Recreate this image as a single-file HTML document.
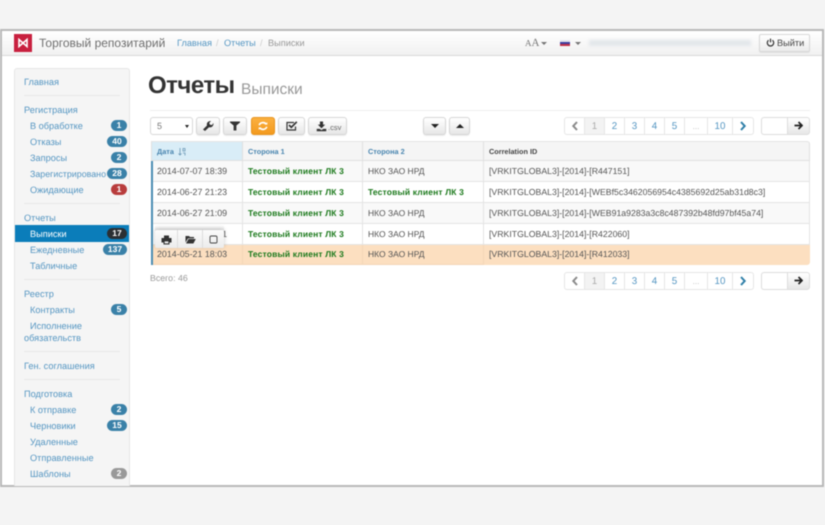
<!DOCTYPE html>
<html lang="ru"><head><meta charset="utf-8"><title>Отчеты</title>
<style>
html,body{margin:0;padding:0;width:825px;height:525px;overflow:hidden;background:#f4f4f4}
#p{position:absolute;left:0;top:0;width:825px;height:525px;overflow:hidden;font-family:"Liberation Sans",sans-serif;filter:blur(.45px);color:#555;text-rendering:geometricPrecision}
#p div,#p span.a{position:absolute;white-space:nowrap}
.f{left:0;top:29px;width:820px;height:454px;background:#fff;border:2px solid #b9b9b9}
.h{left:2px;top:31px;width:820px;height:24px;background:linear-gradient(#fff,#f1f1f1);border-bottom:1px solid #d9d9d9}
.s{left:14px;top:68px;width:114px;height:417px;background:#f5f5f5;border:1px solid #e6e6e6;border-bottom:0;border-radius:3px 3px 0 0}
.n{font-size:9.2px;line-height:12px;color:#5596c2;margin-top:1px}
.d{left:24px;width:96px;height:1px;background:#e8e8e8}
.b{height:11px;line-height:11px;border-radius:6px;background:#3a81a8;color:#fff;font-size:8.5px;font-weight:bold;text-align:center}
.btn{top:117px;height:18px;box-sizing:border-box;background:linear-gradient(#fff,#e7e7e7);border:1px solid #d6d6d6;border-radius:3px;box-shadow:0 1px 1px rgba(0,0,0,.08)}
.btn svg{position:absolute;left:50%;top:50%;transform:translate(-50%,-50%)}
.c{box-sizing:border-box;height:21px;border-right:1px solid #e4e4e4;border-bottom:1px solid #e4e4e4;font-size:8.9px;line-height:21px;padding-left:6px;color:#555}
.g{color:#1d7a1d;font-weight:bold;font-size:8.5px;letter-spacing:.15px}
.k{font-size:8.5px}
.r{font-size:8.72px}
.hd{font-size:7.3px;font-weight:bold;color:#4a86b0;height:20px;line-height:20px;top:141px;box-sizing:border-box;padding-left:5px;border-right:1px solid #e0e0e0;border-top:1px solid #e4e4e4;border-bottom:1px solid #e0e0e0;background:#f5f5f5}
.pg{height:18px;line-height:17px;box-sizing:border-box;background:#fff;border:1px solid #e6e6e6;border-left:0;font-size:9.8px;color:#5596c2;text-align:center}
.pg svg{position:absolute;left:50%;top:50%;transform:translate(-50%,-50%)}
</style></head><body><div id="p">
<div class="f"></div>
<div class="h"></div>

<!-- header -->
<div style="left:14px;top:34px;width:18px;height:18px;background:#c8203f"></div>
<svg style="position:absolute;left:17px;top:38px" width="12" height="10" viewBox="0 0 12 10"><path d="M2 1.5 V8.5 L10 1.5 V8.5 Z" fill="none" stroke="#fff" stroke-width="1.6"/></svg>
<div style="left:39px;top:35px;font-size:12px;line-height:16px;color:#6f6f6f">Торговый репозитарий</div>
<div style="left:177px;top:37px;font-size:9.2px;line-height:12px;color:#5596c2">Главная</div>
<div style="left:216px;top:37px;font-size:9.2px;line-height:12px;color:#ccc">/</div>
<div style="left:224px;top:37px;font-size:9.2px;line-height:12px;color:#5596c2">Отчеты</div>
<div style="left:260px;top:37px;font-size:9.2px;line-height:12px;color:#ccc">/</div>
<div style="left:268px;top:37px;font-size:9.2px;line-height:12px;color:#999">Выписки</div>

<div style="left:525px;top:37px;font-family:'Liberation Serif',serif;font-size:11px;line-height:12px;color:#777"><span style="font-size:9px">A</span>A</div>
<div style="left:541px;top:42px;border:3px solid transparent;border-top-color:#777;border-bottom:0"></div>
<div style="left:560px;top:40px;width:10px;height:2px;background:#e4e4ee"></div>
<div style="left:560px;top:42px;width:10px;height:2px;background:#3c3ea0"></div>
<div style="left:560px;top:44px;width:10px;height:2px;background:#c23048"></div>
<div style="left:575px;top:42px;border:3px solid transparent;border-top-color:#777;border-bottom:0"></div>
<div style="left:589px;top:40px;width:162px;height:6px;background:#e2e6ea;filter:blur(1.5px)"></div>
<div style="left:759px;top:34px;width:51px;height:18px;box-sizing:border-box;background:linear-gradient(#fff,#ececec);border:1px solid #d8d8d8;border-radius:2px;font-size:9.2px;line-height:17px;color:#444;padding-left:17px;box-shadow:0 1px 1px rgba(0,0,0,.08)">Выйти</div>
<svg style="position:absolute;left:766px;top:38px" width="9" height="9" viewBox="0 0 9 9"><path d="M2.6 2.2 A3.2 3.2 0 1 0 6.4 2.2 M4.5 .6 V4.4" fill="none" stroke="#333" stroke-width="1.2"/></svg>

<!-- sidebar -->
<div class="s"></div>
<div style="left:15px;top:225px;width:114px;height:17px;background:#0b7dba"></div>
<div class="d" style="top:95px"></div><div class="d" style="top:203px"></div><div class="d" style="top:279px"></div><div class="d" style="top:351px"></div><div class="d" style="top:379px"></div>

<div class="n" style="left:24px;top:75px">Главная</div>
<div class="n" style="left:24px;top:103px">Регистрация</div>
<div class="n" style="left:30px;top:119px">В обработке</div>
<div class="n" style="left:30px;top:135px">Отказы</div>
<div class="n" style="left:30px;top:151px">Запросы</div>
<div class="n" style="left:30px;top:167px;font-size:8.9px">Зарегистрировано</div>
<div class="n" style="left:30px;top:183px">Ожидающие</div>
<div class="n" style="left:24px;top:211px">Отчеты</div>
<div class="n" style="left:30px;top:227px;color:#fff">Выписки</div>
<div class="n" style="left:30px;top:243px">Ежедневные</div>
<div class="n" style="left:30px;top:259px">Табличные</div>
<div class="n" style="left:24px;top:287px">Реестр</div>
<div class="n" style="left:30px;top:303px">Контракты</div>
<div class="n" style="left:30px;top:319px">Исполнение</div>
<div class="n" style="left:24px;top:331px">обязательств</div>
<div class="n" style="left:24px;top:359px">Ген. соглашения</div>
<div class="n" style="left:24px;top:387px">Подготовка</div>
<div class="n" style="left:30px;top:403px">К отправке</div>
<div class="n" style="left:30px;top:419px">Черновики</div>
<div class="n" style="left:30px;top:435px">Удаленные</div>
<div class="n" style="left:30px;top:451px">Отправленные</div>
<div class="n" style="left:30px;top:467px">Шаблоны</div>

<div class="b" style="left:111px;top:120px;width:16px">1</div>
<div class="b" style="left:107px;top:136px;width:20px">40</div>
<div class="b" style="left:111px;top:152px;width:16px">2</div>
<div class="b" style="left:107px;top:168px;width:20px">28</div>
<div class="b" style="left:111px;top:184px;width:16px;background:#b83c3c">1</div>
<div class="b" style="left:107px;top:228px;width:20px;background:#2b2f33">17</div>
<div class="b" style="left:103px;top:244px;width:24px">137</div>
<div class="b" style="left:111px;top:304px;width:16px">5</div>
<div class="b" style="left:111px;top:404px;width:16px">2</div>
<div class="b" style="left:107px;top:420px;width:20px">15</div>
<div class="b" style="left:111px;top:468px;width:16px;background:#999">2</div>

<!-- title -->
<div style="left:148px;top:71px;font-size:24px;line-height:30px;font-weight:bold;color:#333;letter-spacing:-.5px">Отчеты</div>
<div style="left:241px;top:80px;font-size:15.5px;line-height:20px;color:#999">Выписки</div>
<div style="left:150px;top:110px;width:660px;height:1px;background:#eee"></div>

<!-- toolbar -->
<div style="left:150px;top:117px;width:43px;height:18px;box-sizing:border-box;background:#fff;border:1px solid #d8d8d8;border-radius:3px;font-size:9px;line-height:16px;color:#777;padding-left:6px">5</div>
<div style="left:185px;top:125px;border:2px solid transparent;border-top:3px solid #222;border-bottom:0"></div>

<div class="btn" style="left:196px;width:24px"><svg width="12" height="12" viewBox="0 0 12 12"><path d="M1 9.5 L5 5.5 C4.3 3 6 .8 9 1 L7.2 3 L8 4.8 L10 5 L11.5 3 C11.8 6 9.5 8 7 7.2 L3 11 Z" fill="#333"/></svg></div>
<div class="btn" style="left:223px;width:24px"><svg width="11" height="10" viewBox="0 0 11 10"><path d="M.5 .5 H10.5 V1.5 L6.9 4.5 V9.5 H4.1 V4.5 L.5 1.5 Z" fill="#333"/></svg></div>
<div class="btn" style="left:251px;width:24px;background:linear-gradient(#fbb040,#f39a1e);border-color:#e8941e"><svg width="10" height="10" viewBox="0 0 12 11"><path d="M1.5 4.5 A4.6 4 0 0 1 9.6 3 M10.5 6.5 A4.6 4 0 0 1 2.4 8" fill="none" stroke="#fff" stroke-width="2"/><path d="M8 3.8 H11.2 V.8 Z M4 7.2 H.8 V10.2 Z" fill="#fff"/></svg></div>
<div class="btn" style="left:278px;width:27px"><svg width="12" height="11" viewBox="0 0 12 11"><path d="M9.5 6 V9.5 H1 V2 H8" fill="none" stroke="#333" stroke-width="1.2"/><path d="M3 4.5 L5.3 6.8 L10.8 1.3" fill="none" stroke="#333" stroke-width="1.7"/></svg></div>
<div class="btn" style="left:308px;width:39px"><svg style="left:7px;top:2.5px;transform:none" width="11" height="11" viewBox="0 0 12 12"><path d="M4.3 .5 H7.7 V4 H10 L6 8 L2 4 H4.3 Z M.8 8.6 H4 L6 10 L8 8.6 H11.2 V11.2 H.8 Z" fill="#333"/></svg><span class="a" style="left:19px;top:4px;font-size:7.5px;line-height:11px;color:#666">.csv</span></div>

<div class="btn" style="left:423px;width:23px"><span class="a" style="left:7px;top:6px;width:0;height:0;border:4px solid transparent;border-top:4px solid #222;border-bottom:0"></span></div>
<div class="btn" style="left:449px;width:21px"><span class="a" style="left:6px;top:6px;width:0;height:0;border:4px solid transparent;border-bottom:4px solid #222;border-top:0"></span></div>

<!-- table -->
<div style="left:151px;top:141px;width:659px;height:124px;border-radius:3px;background:#fff"></div>
<div class="hd" style="left:151px;width:92px;background:#d9edf7;padding-left:5px;border-left:1px solid #e0e0e0">Дата<svg style="position:absolute;left:26px;top:6px" width="8" height="8" viewBox="0 0 8 8"><path d="M2 0 V7 M.5 5.5 L2 7 L3.5 5.5 M5 .5 H7 V3 H5 Z M5 5 H7 V7.5" fill="none" stroke="#6a97b5" stroke-width=".8"/></svg></div>
<div class="hd" style="left:243px;width:120px">Сторона 1</div>
<div class="hd" style="left:363px;width:121px">Сторона 2</div>
<div class="hd" style="left:484px;width:326px;color:#444;border-radius:0 3px 0 0">Correlation ID</div>

<!-- rows -->
<div class="c" style="left:151px;top:161px;width:92px;background:#f9f9f9">2014-07-07 18:39</div>
<div class="c g" style="left:243px;top:161px;width:120px;background:#f9f9f9;padding-left:5px">Тестовый клиент ЛК 3</div>
<div class="c k" style="left:363px;top:161px;width:121px;background:#f9f9f9;padding-left:5px">НКО ЗАО НРД</div>
<div class="c r" style="left:484px;top:161px;width:326px;background:#f9f9f9;padding-left:5px">[VRKITGLOBAL3]-[2014]-[R447151]</div>

<div class="c" style="left:151px;top:182px;width:92px;">2014-06-27 21:23</div>
<div class="c g" style="left:243px;top:182px;width:120px;padding-left:5px">Тестовый клиент ЛК 3</div>
<div class="c g" style="left:363px;top:182px;width:121px;padding-left:5px">Тестовый клиент ЛК 3</div>
<div class="c r" style="left:484px;top:182px;width:326px;padding-left:5px">[VRKITGLOBAL3]-[2014]-[WEBf5c3462056954c4385692d25ab31d8c3]</div>

<div class="c" style="left:151px;top:203px;width:92px;background:#f9f9f9">2014-06-27 21:09</div>
<div class="c g" style="left:243px;top:203px;width:120px;background:#f9f9f9;padding-left:5px">Тестовый клиент ЛК 3</div>
<div class="c k" style="left:363px;top:203px;width:121px;background:#f9f9f9;padding-left:5px">НКО ЗАО НРД</div>
<div class="c r" style="left:484px;top:203px;width:326px;background:#f9f9f9;padding-left:5px">[VRKITGLOBAL3]-[2014]-[WEB91a9283a3c8c487392b48fd97bf45a74]</div>

<div class="c" style="left:151px;top:224px;width:92px;">2014-06-27 21:01</div>
<div class="c g" style="left:243px;top:224px;width:120px;padding-left:5px">Тестовый клиент ЛК 3</div>
<div class="c k" style="left:363px;top:224px;width:121px;padding-left:5px">НКО ЗАО НРД</div>
<div class="c r" style="left:484px;top:224px;width:326px;padding-left:5px">[VRKITGLOBAL3]-[2014]-[R422060]</div>

<div class="c" style="left:151px;top:245px;width:92px;background:#fcdfc0;border-color:#f3d6b8;height:20px;line-height:19px">2014-05-21 18:03</div>
<div class="c g" style="left:243px;top:245px;width:120px;background:#fcdfc0;border-color:#f3d6b8;padding-left:5px;height:20px;line-height:19px">Тестовый клиент ЛК 3</div>
<div class="c k" style="left:363px;top:245px;width:121px;background:#fcdfc0;border-color:#f3d6b8;padding-left:5px;height:20px;line-height:19px">НКО ЗАО НРД</div>
<div class="c r" style="left:484px;top:245px;width:326px;background:#fcdfc0;border:0;padding-left:5px;height:20px;line-height:19px;border-radius:0 0 3px 0">[VRKITGLOBAL3]-[2014]-[R412033]</div>
<div style="left:151px;top:161px;width:1.5px;height:104px;background:#4b8db3"></div>

<!-- popup -->
<div style="left:155px;top:225px;width:69px;height:6px;background:linear-gradient(#fff,#e8e8e8)"></div>
<div style="left:155px;top:230px;width:69px;height:18px;background:linear-gradient(#fbfbfb,#ececec);border-radius:2px;box-shadow:0 -1px 4px rgba(0,0,0,.22)"></div>
<div style="left:177px;top:230px;width:1px;height:18px;background:#dcdcdc"></div>
<div style="left:202px;top:230px;width:1px;height:18px;background:#dcdcdc"></div>
<svg style="position:absolute;left:161px;top:235px" width="11" height="10" viewBox="0 0 11 10"><path d="M3 0.5 H8 V3 H10.5 V7.5 H8.5 V9.5 H2.5 V7.5 H.5 V3 H3 Z" fill="#333"/><path d="M3.6 6.4 H7.4 V8.4 H3.6 Z" fill="#eee"/></svg>
<svg style="position:absolute;left:185px;top:235px" width="11" height="9" viewBox="0 0 11 9"><path d="M.5 1 H4 L5 2 H9 V3.4 H3 L.5 7.5 Z M3.5 4 H10.8 L8.4 8.5 H1 Z" fill="#333"/></svg>
<svg style="position:absolute;left:209px;top:235px" width="9" height="9" viewBox="0 0 9 9"><rect x="1" y="1" width="7" height="7" rx="1.3" fill="none" stroke="#444" stroke-width=".9"/></svg>

<div style="left:150px;top:272px;font-size:8.8px;line-height:12px;color:#999">Всего: 46</div>

<!-- pager top -->
<div class="pg" style="left:564px;top:117px;width:21px;border-left:1px solid #e6e6e6;border-radius:3px 0 0 3px"><svg width="7" height="10" viewBox="0 0 7 10"><path d="M5.5 1 L1.8 5 L5.5 9" fill="none" stroke="#8a8a8a" stroke-width="2"/></svg></div>
<div class="pg" style="left:585px;top:117px;width:20px;background:#f3f3f3;color:#aaa">1</div>
<div class="pg" style="left:605px;top:117px;width:20px">2</div>
<div class="pg" style="left:625px;top:117px;width:20px">3</div>
<div class="pg" style="left:645px;top:117px;width:20px">4</div>
<div class="pg" style="left:665px;top:117px;width:20px">5</div>
<div class="pg" style="left:685px;top:117px;width:23px;color:#bbb;font-size:8px">...</div>
<div class="pg" style="left:708px;top:117px;width:25px">10</div>
<div class="pg" style="left:733px;top:117px;width:21px;border-radius:0 3px 3px 0"><svg width="7" height="10" viewBox="0 0 7 10"><path d="M1.5 1 L5.2 5 L1.5 9" fill="none" stroke="#2f7fa8" stroke-width="2"/></svg></div>
<div style="left:761px;top:117px;width:27px;height:18px;box-sizing:border-box;background:#fff;border:1px solid #ddd;border-right:0;border-radius:3px 0 0 3px"></div>
<div style="left:787px;top:117px;width:23px;height:18px;box-sizing:border-box;background:linear-gradient(#fff,#e7e7e7);border:1px solid #ddd;border-radius:0 3px 3px 0"></div>
<svg style="position:absolute;left:794px;top:121px" width="9" height="9" viewBox="0 0 9 9"><path d="M.5 4.5 H7.5 M4.5 1 L8 4.5 L4.5 8" fill="none" stroke="#222" stroke-width="1.7"/></svg>

<!-- pager bottom -->
<div class="pg" style="left:564px;top:272px;width:21px;border-left:1px solid #e6e6e6;border-radius:3px 0 0 3px"><svg width="7" height="10" viewBox="0 0 7 10"><path d="M5.5 1 L1.8 5 L5.5 9" fill="none" stroke="#8a8a8a" stroke-width="2"/></svg></div>
<div class="pg" style="left:585px;top:272px;width:20px;background:#f3f3f3;color:#aaa">1</div>
<div class="pg" style="left:605px;top:272px;width:20px">2</div>
<div class="pg" style="left:625px;top:272px;width:20px">3</div>
<div class="pg" style="left:645px;top:272px;width:20px">4</div>
<div class="pg" style="left:665px;top:272px;width:20px">5</div>
<div class="pg" style="left:685px;top:272px;width:23px;color:#bbb;font-size:8px">...</div>
<div class="pg" style="left:708px;top:272px;width:25px">10</div>
<div class="pg" style="left:733px;top:272px;width:21px;border-radius:0 3px 3px 0"><svg width="7" height="10" viewBox="0 0 7 10"><path d="M1.5 1 L5.2 5 L1.5 9" fill="none" stroke="#2f7fa8" stroke-width="2"/></svg></div>
<div style="left:761px;top:272px;width:27px;height:18px;box-sizing:border-box;background:#fff;border:1px solid #ddd;border-right:0;border-radius:3px 0 0 3px"></div>
<div style="left:787px;top:272px;width:23px;height:18px;box-sizing:border-box;background:linear-gradient(#fff,#e7e7e7);border:1px solid #ddd;border-radius:0 3px 3px 0"></div>
<svg style="position:absolute;left:794px;top:276px" width="9" height="9" viewBox="0 0 9 9"><path d="M.5 4.5 H7.5 M4.5 1 L8 4.5 L4.5 8" fill="none" stroke="#222" stroke-width="1.7"/></svg>
</div></body></html>
